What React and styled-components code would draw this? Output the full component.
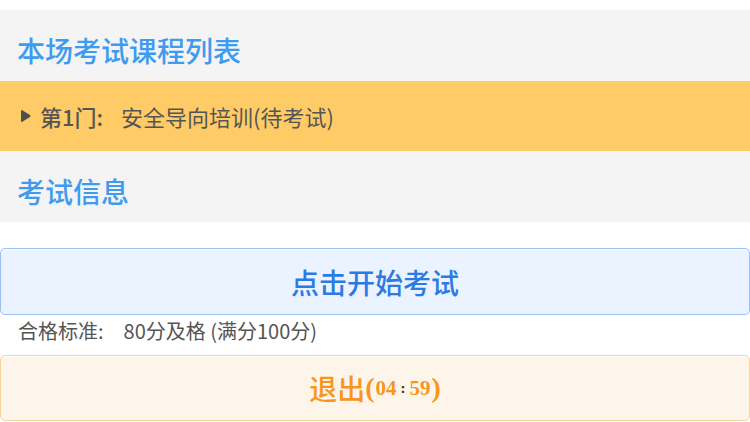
import styled, { createGlobalStyle } from "styled-components";

const GlobalStyle = createGlobalStyle`
  html, body {
    margin: 0;
    padding: 0;
    background: #ffffff;
    font-family: "Noto Sans CJK SC", "Noto Sans", sans-serif;
  }
`;

const Page = styled.div`
  width: 750px;
  height: 422px;
  padding-top: 10px;
  box-sizing: border-box;
  overflow: hidden;
  position: relative;
`;

const SectionTitle = styled.div`
  height: 71px;
  box-sizing: border-box;
  display: flex;
  align-items: center;
  padding: 8px 0 0 17px;
  background: #f4f4f4;
  color: #3f9bf0;
  font-size: 28px;
  font-weight: 500;
`;

const CourseRow = styled.div`
  height: 70px;
  display: flex;
  align-items: center;
  padding-left: 20px;
  background: #fecb66;
  color: #555555;
  font-size: 22px;
`;

const Arrow = styled.svg`
  width: 11px;
  height: 14px;
  margin-right: 9px;
`;

const CourseIndex = styled.span`
  font-weight: 500;
  margin-right: 18px;
`;

const InfoList = styled.div`
  position: relative;
  padding-top: 23px;
`;

const InfoRow = styled.div`
  height: 34px;
  display: flex;
  align-items: center;
  padding-left: 18px;
  color: #555555;
  font-size: 20px;
`;

const Label = styled.span`
  margin-right: 20px;
`;

const Button = styled.button`
  display: flex;
  align-items: center;
  justify-content: center;
  width: 100%;
  height: ${(p) => p.$h}px;
  margin: 0;
  padding: 0;
  border-radius: 5px;
  border: 1px solid ${(p) => p.$border};
  background: ${(p) => p.$bg};
  box-shadow: inset 0 9px 0 -8px rgba(255, 255, 255, 0.9);
  color: ${(p) => p.$color};
  font-family: "Noto Sans CJK SC", "Noto Sans", sans-serif;
  font-size: 28px;
  font-weight: 500;
  cursor: pointer;
`;

const StartButton = styled(Button)`
  position: absolute;
  top: 26px;
  left: 0;
`;

const ExitButton = styled(Button)`
  margin-top: 8px;
`;

const Timer = styled.span`
  font-family: "Liberation Serif", serif;
  font-weight: 700;
  display: inline-flex;
  align-items: center;
`;

const Paren = styled.span`
  font-size: 28px;
`;

const Digits = styled.span`
  font-size: 21px;
  margin: 0 1px;
`;

const Colon = styled.span`
  font-size: 15px;
  color: #333333;
  margin: 0 3px;
`;

export default function App() {
  return (
    <>
      <GlobalStyle />
      <Page>
        <SectionTitle>本场考试课程列表</SectionTitle>
        <CourseRow>
          <Arrow viewBox="0 0 11 14">
            <path d="M1 2 Q1 0.5 2.3 1.2 L10 6.1 Q11 7 10 7.9 L2.3 12.8 Q1 13.5 1 12 Z" fill="#4f4f4f" />
          </Arrow>
          <CourseIndex>第1门:</CourseIndex>
          <span>安全导向培训(待考试)</span>
        </CourseRow>
        <SectionTitle>考试信息</SectionTitle>
        <InfoList>
          <InfoRow>
            <Label>考试时长:</Label>
            <span>5分钟</span>
          </InfoRow>
          <InfoRow>
            <Label>考试次数:</Label>
            <span>1次</span>
          </InfoRow>
          <InfoRow>
            <Label>合格标准:</Label>
            <span>80分及格 (满分100分)</span>
          </InfoRow>
          <StartButton $h={67} $border="#9ec0f0" $bg="#eaf3ff" $color="#2c7be5">
            点击开始考试
          </StartButton>
          <ExitButton $h={66} $border="#f5d59a" $bg="#fdf5ea" $color="#f7961f">
            退出
            <Timer>
              <Paren>(</Paren>
              <Digits>04</Digits>
              <Colon>:</Colon>
              <Digits>59</Digits>
              <Paren>)</Paren>
            </Timer>
          </ExitButton>
        </InfoList>
      </Page>
    </>
  );
}
